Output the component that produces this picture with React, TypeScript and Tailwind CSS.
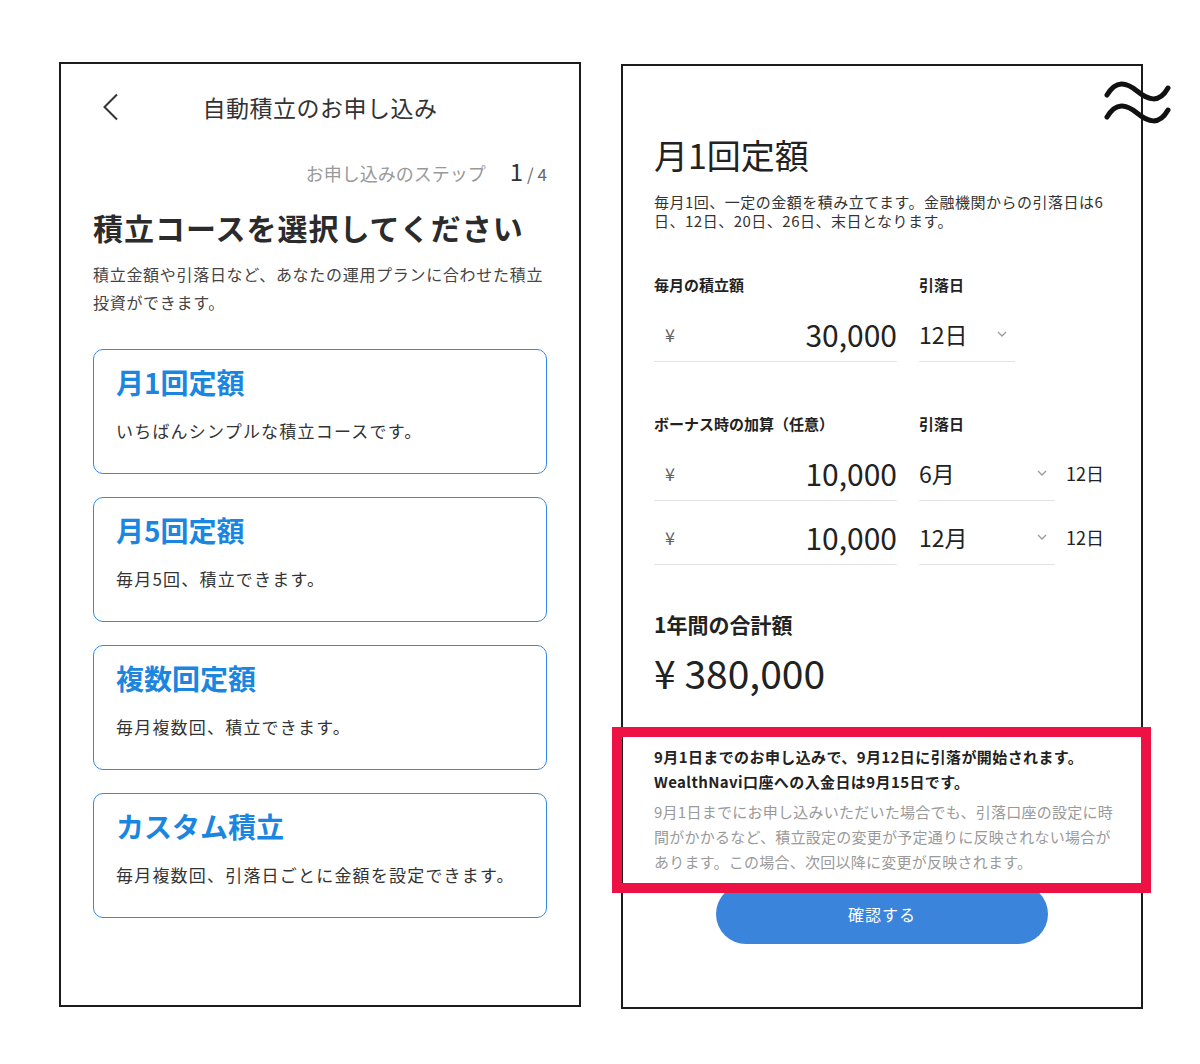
import React from "react";

const font = "font-['Noto_Sans_CJK_JP','Noto_Sans',sans-serif]";

const courses = [
  { title: "月1回定額", desc: "いちばんシンプルな積立コースです。" },
  { title: "月5回定額", desc: "毎月5回、積立できます。" },
  { title: "複数回定額", desc: "毎月複数回、積立できます。" },
  { title: "カスタム積立", desc: "毎月複数回、引落日ごとに金額を設定できます。" },
];

function Chevron() {
  return (
    <svg width="10" height="6" viewBox="0 0 10 6" fill="none">
      <polyline points="1,1 5,5 9,1" stroke="#9a9a9a" strokeWidth="1.3" />
    </svg>
  );
}

function AmountRow({ amount, select, width, extra }: { amount: string; select: string; width: string; extra?: string }) {
  return (
    <div className="flex h-[55px]">
      {/* 金額入力 */}
      <div className="w-[243px] flex items-center justify-between border-b-[1.5px] border-[#e4e4e4] pl-[11px]">
        <span className="text-[18px] text-[#666]">¥</span>
        <span className="text-[30px] text-[#222] leading-none">{amount}</span>
      </div>
      {/* 引落日セレクト */}
      <div className={`${width} ml-[22px] flex items-center justify-between border-b-[1.5px] border-[#e4e4e4] pr-[8px]`}>
        <span className="text-[23px] text-[#222] leading-none">{select}</span>
        <Chevron />
      </div>
      {extra && <span className="ml-[11px] self-center text-[18px] text-[#222]">{extra}</span>}
    </div>
  );
}

function CourseSelect() {
  return (
    <section className="w-[522px] h-[945px] border-2 border-[#1c1c1c] flex flex-col px-[32px] bg-white">
      {/* ヘッダー */}
      <header className="mt-[21px] h-[44px] grid grid-cols-[40px_1fr_40px] items-center">
        <svg width="17" height="28" viewBox="0 0 17 28" fill="none" className="ml-[9px]">
          <polyline points="15,1.5 2.5,14 15,26.5" stroke="#333" strokeWidth="2" />
        </svg>
        <h1 className="text-center text-[23px] tracking-[0.5px] text-[#333]">自動積立のお申し込み</h1>
        <span />
      </header>

      {/* ステップ */}
      <div className="mt-[24px] h-[30px] flex justify-end items-baseline">
        <span className="text-[18px] text-[#999]">お申し込みのステップ</span>
        <span className="ml-[24px] text-[24px] text-[#333]">1</span>
        <span className="ml-[4px] text-[17px] text-[#666]">/ 4</span>
      </div>

      <h2 className="mt-[24px] text-[30px] leading-[40px] font-bold tracking-[1px] text-[#2b2b2b]">
        積立コースを選択してください
      </h2>
      <p className="mt-[13px] text-[16px] leading-[28px] tracking-[0.7px] text-[#444]">
        積立金額や引落日など、あなたの運用プランに合わせた積立
        <br />
        投資ができます。
      </p>

      {/* コース一覧 */}
      <div className="mt-[33px] flex flex-col gap-[23px]">
        {courses.map((c) => (
          <div key={c.title} className="h-[125px] rounded-[10px] border-[1.5px] border-[#2f8ce0] px-[22px] pt-[14px]">
            <div className="text-[28px] leading-[36px] font-bold text-[#1a86df]">{c.title}</div>
            <div className="mt-[18px] text-[17px] leading-[26px] tracking-[1.2px] text-[#333]">{c.desc}</div>
          </div>
        ))}
      </div>
    </section>
  );
}

function MonthlyForm() {
  return (
    <section className="relative mt-[2px] w-[522px] h-[945px] border-2 border-[#1c1c1c] flex flex-col px-[31px] pt-[69px] bg-white">
      <h1 className="text-[34px] leading-[40px] text-[#222]">月1回定額</h1>
      <p className="mt-[17px] text-[15px] leading-[19px] tracking-[0.5px] text-[#333] whitespace-nowrap">
        毎月1回、一定の金額を積み立てます。金融機関からの引落日は6
        <br />
        日、12日、20日、26日、末日となります。
      </p>

      <div className="mt-[45px] h-[20px] flex items-center text-[15px] font-bold text-[#222]">
        <span className="w-[265px]">毎月の積立額</span>
        <span>引落日</span>
      </div>
      <div className="mt-[12px]">
        <AmountRow amount="30,000" select="12日" width="w-[96px]" />
      </div>

      <div className="mt-[52px] h-[20px] flex items-center text-[15px] font-bold text-[#222]">
        <span className="w-[265px]">ボーナス時の加算（任意）</span>
        <span>引落日</span>
      </div>
      <div className="mt-[12px] flex flex-col gap-[9px]">
        <AmountRow amount="10,000" select="6月" width="w-[136px]" extra="12日" />
        <AmountRow amount="10,000" select="12月" width="w-[136px]" extra="12日" />
      </div>

      <div className="mt-[45px] text-[21px] leading-[28px] font-bold text-[#222]">1年間の合計額</div>
      <div className="mt-[12px] text-[39px] leading-[44px] text-[#222]">¥ 380,000</div>

      {/* 注意書き */}
      <div className="mt-[50px] text-[15px] leading-[25px] font-bold tracking-[0.4px] text-[#222] whitespace-nowrap">
        9月1日までのお申し込みで、9月12日に引落が開始されます。
        <br />
        WealthNavi口座への入金日は9月15日です。
      </div>
      <div className="mt-[5px] text-[15px] leading-[25px] tracking-[0.25px] text-[#9a9a9a] whitespace-nowrap">
        9月1日までにお申し込みいただいた場合でも、引落口座の設定に時
        <br />
        間がかかるなど、積立設定の変更が予定通りに反映されない場合が
        <br />
        あります。この場合、次回以降に変更が反映されます。
      </div>

      <button className="mt-[10px] mx-auto w-[332px] h-[60px] rounded-full bg-[#3b84dc] text-white text-[16px] tracking-[1px]">
        確認する
      </button>

      {/* 赤枠（注釈） */}
      <div className="absolute left-[-11px] top-[661px] w-[539px] h-[166px] border-[10px] border-[#ee1144] pointer-events-none" />
    </section>
  );
}

export default function App() {
  return (
    <div className={`${font} relative w-[1200px] h-[1064px] bg-white flex items-start gap-[40px] pl-[59px] pt-[62px]`}>
      <CourseSelect />
      <MonthlyForm />

      {/* 省略記号 ≈ */}
      <svg className="absolute left-[1104px] top-[78px]" width="68" height="50" viewBox="0 0 68 50" fill="none">
        <path d="M3 17 C12 2 22 4 33 13 S55 26 64 10" stroke="#111" strokeWidth="5" strokeLinecap="round" />
        <path d="M3 39 C12 24 22 26 33 35 S55 48 64 32" stroke="#111" strokeWidth="5" strokeLinecap="round" />
      </svg>
    </div>
  );
}
